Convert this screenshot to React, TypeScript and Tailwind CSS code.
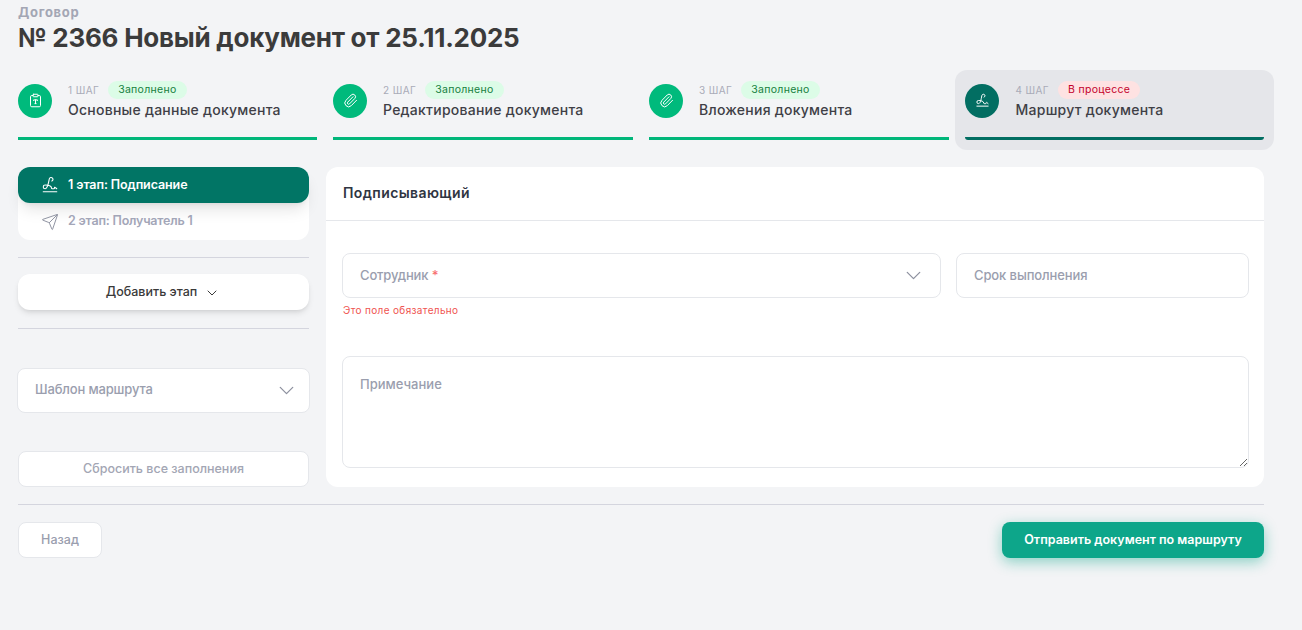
import React from 'react';
import { ChevronDown, ClipboardType, Paperclip, Send, Signature } from 'lucide-react';

const steps = [
  { num: '1 ШАГ', title: 'Основные данные документа', status: 'Заполнено', Icon: ClipboardType, width: 'w-[299px]' },
  { num: '2 ШАГ', title: 'Редактирование документа', status: 'Заполнено', Icon: Paperclip, width: 'w-[300px]' },
  { num: '3 ШАГ', title: 'Вложения документа', status: 'Заполнено', Icon: Paperclip, width: 'w-[300px]' },
  { num: '4 ШАГ', title: 'Маршрут документа', status: 'В процессе', Icon: Signature, width: 'w-[319px]', active: true },
];

const App: React.FC = () => {
  return (
    <div className="min-h-screen bg-[#f3f4f6] pl-[18px] pr-[38px] pt-[4px] font-['Inter','Noto_Sans',sans-serif] text-[#3d3d3d]">
      <div className="h-[16px] text-[13px] leading-[16px] font-bold tracking-[0.7px] text-[#a3a6b4]">Договор</div>
      <h1 className="mt-[1px] h-[34px] text-[26px] leading-[34px] font-bold tracking-[-0.25px] text-[#3b3b3b]">
        № 2366 Новый документ от 25.11.2025
      </h1>

      <div className="mt-[15px] flex w-[1256px] gap-4">
        {steps.map((s) => (
          <div
            key={s.num}
            className={
              s.active
                ? `ml-[-10px] flex h-[80px] ${s.width} shrink-0 flex-col justify-between rounded-xl bg-[#e5e6ea] px-[10px] pt-[11px] pb-[10px]`
                : `flex h-[80px] ${s.width} shrink-0 flex-col justify-between pt-[11px] pb-[10px]`
            }
          >
            <div className={s.active ? 'flex items-center gap-[16.5px]' : 'flex items-center gap-4'}>
              <div
                className={
                  s.active
                    ? 'flex h-[34px] w-[34px] items-center justify-center rounded-full bg-[#026e62] text-white'
                    : 'flex h-[34px] w-[34px] items-center justify-center rounded-full bg-[#00ba7c] text-white'
                }
              >
                <s.Icon size={15} strokeWidth={1.6} />
              </div>
              <div>
                <div className="flex h-[18px] items-center gap-[9px]">
                  <span className="text-[10px] tracking-[0.4px] text-[#a9abb8]">{s.num}</span>
                  <span
                    className={
                      s.active
                        ? 'rounded-full bg-[#fee2e2] px-[10px] py-[2px] text-[10.5px] leading-[14px] tracking-[0.3px] text-[#c4002b]'
                        : 'rounded-full bg-[#dcfce7] px-[10px] py-[2px] text-[10.5px] leading-[14px] tracking-[0.3px] text-[#15803d]'
                    }
                  >
                    {s.status}
                  </span>
                </div>
                <div className="mt-[1px] text-[14px] leading-[20px] font-medium tracking-[0.25px] text-[#3f3f46]">{s.title}</div>
              </div>
            </div>
            <div className={s.active ? 'h-[3px] rounded-b bg-[#026e62]' : 'h-[3px] bg-[#00b67a]'} />
          </div>
        ))}
      </div>

      <div className="mt-[17px] flex w-[1246px] gap-[17px]">
        <div className="flex w-[291px] shrink-0 flex-col">
          <div className="rounded-xl bg-white">
            <div className="flex h-[36px] items-center gap-[9px] rounded-xl bg-[#017565] pl-[23px] text-[12.5px] font-semibold tracking-[-0.1px] text-white shadow-lg">
              <Signature size={18} strokeWidth={1.5} />
              1 этап: Подписание
            </div>
            <div className="flex h-[37px] items-center gap-[9px] pl-[23px] text-[12.5px] font-semibold tracking-[-0.2px] text-[#a3a6b8]">
              <Send size={18} strokeWidth={1.3} className="text-[#8d919f]" />
              2 этап: Получатель 1
            </div>
          </div>
          <div className="mt-[17px] h-px bg-[#d4d5de]" />
          <button className="mt-[16px] flex h-[36px] items-center justify-center gap-[7px] rounded-xl bg-white pt-px pr-px text-[12.5px] font-medium text-[#3a3a3a] shadow-md">
            Добавить этап
            <ChevronDown size={16} strokeWidth={1.5} />
          </button>
          <div className="mt-[18px] h-px bg-[#d4d5de]" />
          <div className="-mx-px mt-[39px] flex h-[45px] items-center justify-between rounded-lg border border-[#e5e7eb] bg-white pl-[17px] pr-[10px] text-[13px] font-medium tracking-[-0.15px] text-[#9a9eae]">
            <span className="-mt-px">Шаблон маршрута</span>
            <ChevronDown size={25} strokeWidth={1.2} className="text-[#8d919f]" />
          </div>
          <button className="mt-[38px] h-[36px] rounded-lg border border-[#e5e7eb] bg-white text-[12.5px] font-medium text-[#a3a6b4]">
            Сбросить все заполнения
          </button>
        </div>

        <div className="flex-1 rounded-xl bg-white pb-[19px]">
          <div className="flex h-[54px] items-center border-b border-[#e5e7eb] pb-[2px] pl-[17px] text-[14px] font-semibold tracking-[0.4px] text-[#2f3542]">
            Подписывающий
          </div>
          <div className="pl-[16px] pr-[15px] pt-[32px]">
            <div className="flex gap-[15px]">
              <div className="w-[599px] shrink-0">
                <div className="flex h-[45px] items-center justify-between rounded-lg border border-[#e5e7eb] pl-[17px] pr-[14px] text-[13px] font-medium tracking-[-0.15px] text-[#9a9eae]">
                  <span>
                    Сотрудник <span className="text-[#f87171]">*</span>
                  </span>
                  <ChevronDown size={25} strokeWidth={1.2} className="text-[#8d919f]" />
                </div>
                <div className="ml-px mt-[6px] text-[10px] leading-[13px] tracking-[0.35px] text-[#ef5350]">Это поле обязательно</div>
              </div>
              <div className="flex h-[45px] flex-1 items-center rounded-lg border border-[#e5e7eb] pl-[17px] text-[13px] font-medium tracking-[-0.1px] text-[#9a9eae]">
                Срок выполнения
              </div>
            </div>
            <textarea
              placeholder="Примечание"
              className="mt-[39px] block h-[112px] w-full rounded-lg border border-[#e5e7eb] bg-white px-[17px] pt-[18px] text-[13px] font-medium outline-none placeholder:text-[#9a9eae]"
            />
          </div>
        </div>
      </div>

      <div className="mt-[17px] h-px w-[1246px] bg-[#d4d5de]" />

      <div className="mt-[17px] flex w-[1246px] items-center justify-between">
        <button className="h-[36px] w-[84px] rounded-lg border border-[#e5e7eb] bg-white text-[12.5px] font-medium text-[#9a9eae]">
          Назад
        </button>
        <button className="h-[36px] w-[262px] rounded-lg bg-[#0da68a] text-[12.5px] font-semibold text-white shadow-[0_4px_14px_rgba(13,166,138,0.45)]">
          Отправить документ по маршруту
        </button>
      </div>
    </div>
  );
};

export default App;
